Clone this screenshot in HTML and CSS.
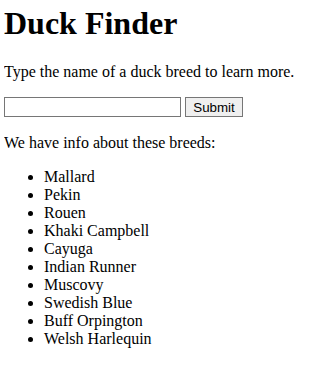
FILE: index.html
```html
<!DOCTYPE html>
<html lang="en">
  <head>
    <meta charset="UTF-8" />
    <title>Duck Finder</title>
    <link rel="stylesheet" href="styles.css">
  </head>
  <body>
    <h1>Duck Finder</h1>
    <p>Type the name of a duck breed to learn more.</p>
    <form class="search">
      <input class="breedInput" type="text" name="breed" />
      <button class="submitBtn" type="submit">Submit</button>
    </form>
    <p>We have info about these breeds:</p>
    <ul>
      <li>Mallard</li>
      <li>Pekin</li>
      <li>Rouen</li>
      <li>Khaki Campbell</li>
      <li>Cayuga</li>
      <li>Indian Runner</li>
      <li>Muscovy</li>
      <li>Swedish Blue</li>
      <li>Buff Orpington</li>
      <li>Welsh Harlequin</li>
    </ul>
  </body>
</html>
```

FILE: styles.css
```css
body {
  font-family: "Liberation Serif", serif;
  margin: 5px 4px 4px;
}
h1 {
  margin-top: 0;
}
.search {
  display: flex;
  gap: 4px;
  align-items: center;
  margin-bottom: 17px;
}
.breedInput {
  box-sizing: border-box;
  width: 177px;
  height: 20px;
  margin: 0;
  border: 1px solid #767676;
  padding: 1px 2px;
}
.submitBtn {
  box-sizing: border-box;
  width: 58px;
  height: 20px;
  margin: 0;
  padding: 0 6px;
  border: 1px solid #767676;
  background-color: #efefef;
  font-family: "Liberation Sans", Arial, sans-serif;
  font-size: 13.33px;
  color: #000;
}
```
